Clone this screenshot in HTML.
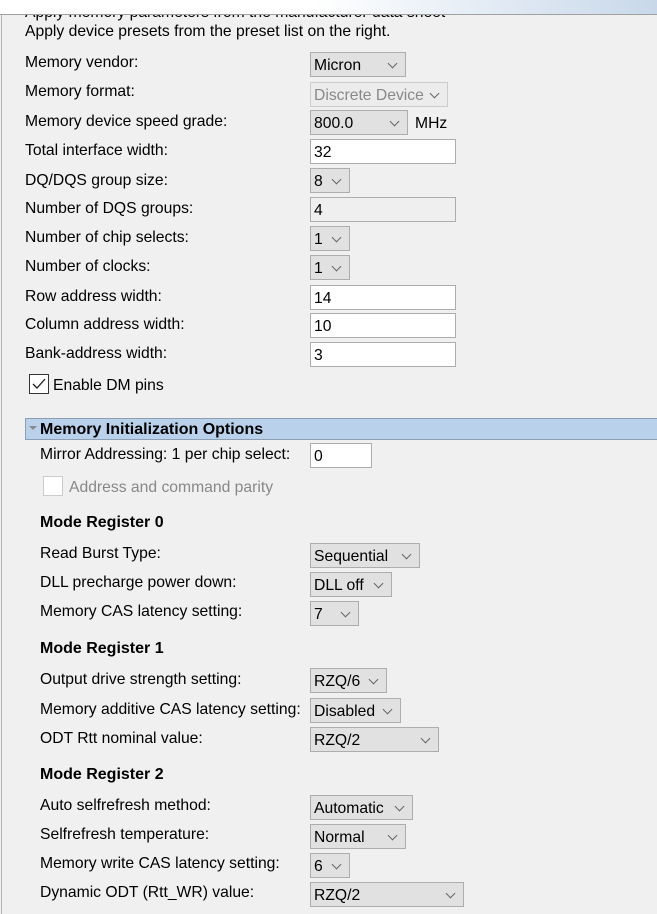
<!DOCTYPE html>
<html><head><meta charset="utf-8"><style>
*{margin:0;padding:0;box-sizing:border-box}
body{width:657px;height:914px;overflow:hidden;background:#f0f0f0;font-family:"Liberation Sans",sans-serif;font-size:15.7px;color:#000;position:relative}
.a{position:absolute;white-space:nowrap;line-height:18px}
.dd{position:absolute;background:#e1e1e1;border:1px solid #adadad;height:25px;padding-left:3px;line-height:25px;font-size:15.7px}
.dd:after{content:"";position:absolute;right:9px;top:7px;width:6px;height:6px;border-right:1px solid #666;border-bottom:1px solid #666;transform:rotate(45deg)}
.tf{position:absolute;background:#fff;border:1px solid #adadad;height:25px;padding-left:3px;line-height:25px}
.b{font-weight:bold;font-size:16px}
</style></head><body>
<div style="position:absolute;left:1px;top:15px;width:1px;height:899px;background:#b4b4b4"></div>
<div class="a" style="left:25px;top:4px">Apply memory parameters from the manufacturer data sheet</div>
<div style="position:absolute;left:0;top:0;width:657px;height:15px;background:linear-gradient(90deg,#fff 0%,#fff 48%,#c8d8ea 100%);border-bottom:1px solid #a0a0a0"></div>
<div class="a" style="left:25px;top:23px">Apply device presets from the preset list on the right.</div>

<div class="a" style="left:25px;top:54px">Memory vendor:</div>
<div class="dd" style="left:310px;top:52px;width:96px">Micron</div>
<div class="a" style="left:25px;top:83px">Memory format:</div>
<div class="dd" style="left:310px;top:82px;width:138px;background:#ececec;border-color:#ccc;color:#888">Discrete Device</div>
<div class="a" style="left:25px;top:113px">Memory device speed grade:</div>
<div class="dd" style="left:310px;top:110px;width:98px">800.0</div>
<div class="a" style="left:415px;top:115px">MHz</div>
<div class="a" style="left:25px;top:142px">Total interface width:</div>
<div class="tf" style="left:310px;top:139px;width:146px">32</div>
<div class="a" style="left:25px;top:172px">DQ/DQS group size:</div>
<div class="dd" style="left:310px;top:168px;width:40px">8</div>
<div class="a" style="left:25px;top:200px">Number of DQS groups:</div>
<div class="tf" style="left:310px;top:197px;width:146px;background:#efefef">4</div>
<div class="a" style="left:25px;top:229px">Number of chip selects:</div>
<div class="dd" style="left:310px;top:226px;width:40px">1</div>
<div class="a" style="left:25px;top:258px">Number of clocks:</div>
<div class="dd" style="left:310px;top:255px;width:40px">1</div>
<div class="a" style="left:25px;top:288px">Row address width:</div>
<div class="tf" style="left:310px;top:285px;width:146px">14</div>
<div class="a" style="left:25px;top:316px">Column address width:</div>
<div class="tf" style="left:310px;top:313px;width:146px">10</div>
<div class="a" style="left:25px;top:345px">Bank-address width:</div>
<div class="tf" style="left:310px;top:342px;width:146px">3</div>

<div style="position:absolute;left:29px;top:374px;width:20px;height:20px;border:1px solid #333;background:#fff"><svg width="18" height="18" style="position:absolute;left:0;top:0"><path d="M3 9 L7 13 L15 4" stroke="#222" stroke-width="1.3" fill="none"/></svg></div>
<div class="a" style="left:53px;top:377px">Enable DM pins</div>

<div style="position:absolute;left:25px;top:418px;width:640px;height:22px;background:#b9d1ea;border:1px solid #8d9fb3"></div>
<div style="position:absolute;left:29px;top:426px;width:0;height:0;border-left:4px solid transparent;border-right:4px solid transparent;border-top:4px solid #8a8a8a"></div>
<div class="a b" style="left:40px;top:421px">Memory Initialization Options</div>

<div class="a" style="left:40px;top:446px">Mirror Addressing: 1 per chip select:</div>
<div class="tf" style="left:310px;top:443px;width:62px">0</div>
<div style="position:absolute;left:43px;top:476px;width:20px;height:20px;border:1px solid #ccc;background:#fff"></div>
<div class="a" style="left:69px;top:479px;color:#888">Address and command parity</div>

<div class="a b" style="left:40px;top:514px">Mode Register 0</div>
<div class="a" style="left:40px;top:545px">Read Burst Type:</div>
<div class="dd" style="left:310px;top:543px;width:110px">Sequential</div>
<div class="a" style="left:40px;top:574px">DLL precharge power down:</div>
<div class="dd" style="left:310px;top:572px;width:82px">DLL off</div>
<div class="a" style="left:40px;top:603px">Memory CAS latency setting:</div>
<div class="dd" style="left:310px;top:601px;width:49px">7</div>

<div class="a b" style="left:40px;top:640px">Mode Register 1</div>
<div class="a" style="left:40px;top:671px">Output drive strength setting:</div>
<div class="dd" style="left:310px;top:668px;width:77px">RZQ/6</div>
<div class="a" style="left:40px;top:701px">Memory additive CAS latency setting:</div>
<div class="dd" style="left:310px;top:698px;width:91px">Disabled</div>
<div class="a" style="left:40px;top:730px">ODT Rtt nominal value:</div>
<div class="dd" style="left:310px;top:727px;width:129px">RZQ/2</div>

<div class="a b" style="left:40px;top:766px">Mode Register 2</div>
<div class="a" style="left:40px;top:797px">Auto selfrefresh method:</div>
<div class="dd" style="left:310px;top:795px;width:103px">Automatic</div>
<div class="a" style="left:40px;top:826px">Selfrefresh temperature:</div>
<div class="dd" style="left:310px;top:824px;width:96px">Normal</div>
<div class="a" style="left:40px;top:855px">Memory write CAS latency setting:</div>
<div class="dd" style="left:310px;top:853px;width:40px">6</div>
<div class="a" style="left:40px;top:884px">Dynamic ODT (Rtt_WR) value:</div>
<div class="dd" style="left:310px;top:882px;width:154px">RZQ/2</div>
</body></html>
